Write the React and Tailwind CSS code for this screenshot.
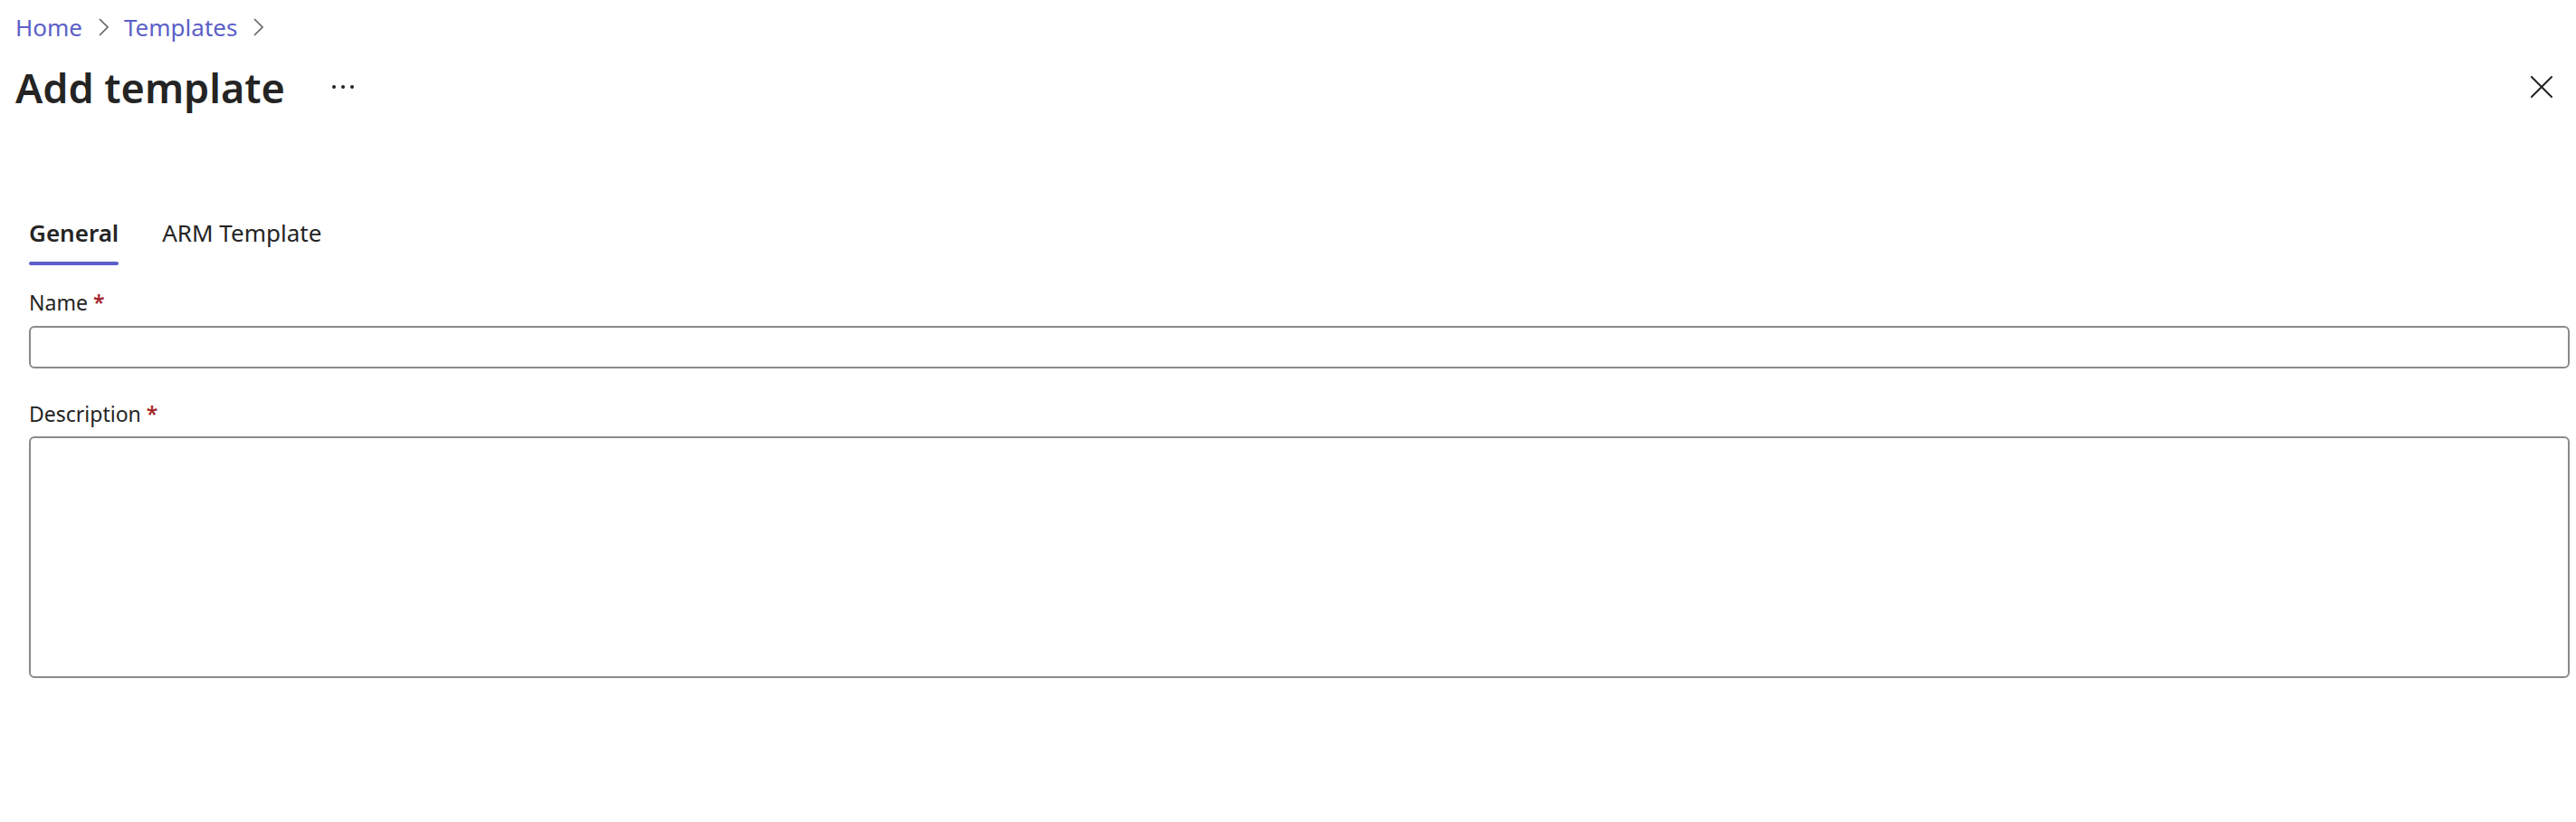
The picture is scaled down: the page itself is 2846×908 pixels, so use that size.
import React, { useState } from 'react';

const Chevron = () => (
  <svg width="14" height="22" viewBox="0 0 14 22" fill="none" stroke="#616161" strokeWidth="1.6" className="mx-[16px]">
    <path d="M3 2l9 9-9 9" />
  </svg>
);

const Required = () => <span className="text-[#a4262c] ml-[6px] font-semibold">*</span>;

export default function App() {
  const [tab, setTab] = useState('general');

  return (
    <div className="w-[2846px] h-[908px] bg-white text-[#242424] font-['Segoe_UI','Noto_Sans',sans-serif]">
      {/* Header */}
      <div className="pl-[17px] pr-[22px] pt-[10px]">
        <nav className="flex items-center h-[40px] text-[26px] text-[#5b5fc7]">
          <a href="#" className="hover:underline">Home</a>
          <Chevron />
          <a href="#" className="hover:underline">Templates</a>
          <Chevron />
        </nav>
        <div className="flex items-center justify-between mt-[18px] h-[56px]">
          <div className="flex items-center">
            <h1 className="text-[45px] font-semibold leading-none">Add template</h1>
            <button className="ml-[50px] flex items-center gap-[6px] px-[2px] h-[20px]">
              <span className="w-[4px] h-[4px] rounded-full bg-[#242424]" />
              <span className="w-[4px] h-[4px] rounded-full bg-[#242424]" />
              <span className="w-[4px] h-[4px] rounded-full bg-[#242424]" />
            </button>
          </div>
          <button className="w-[32px] h-[32px] flex items-center justify-center">
            <svg width="24" height="24" viewBox="0 0 24 24" fill="none" stroke="#242424" strokeWidth="2" strokeLinecap="square">
              <path d="M1 1l22 22M23 1L1 23" />
            </svg>
          </button>
        </div>
      </div>

      {/* Tabs */}
      <div className="px-[32px] mt-[114px]">
        <div className="flex items-start gap-[48px] text-[26px]">
          <button onClick={() => setTab('general')} className="flex flex-col items-stretch">
            <span className={tab === 'general' ? 'font-semibold' : ''}>General</span>
            <span className={`h-[4px] mt-[12px] rounded-full ${tab === 'general' ? 'bg-[#5b5fc7]' : 'bg-transparent'}`} />
          </button>
          <button onClick={() => setTab('arm')} className="flex flex-col items-stretch">
            <span className={tab === 'arm' ? 'font-semibold' : ''}>ARM Template</span>
            <span className={`h-[4px] mt-[12px] rounded-full ${tab === 'arm' ? 'bg-[#5b5fc7]' : 'bg-transparent'}`} />
          </button>
        </div>

        {/* Form */}
        <div className="mt-[25px] text-[23px]">
          <label className="block leading-[32px]">Name<Required /></label>
          <input className="mt-[10px] block w-[2807px] h-[47px] border-2 border-[#8a8a8a] rounded-[6px] px-[14px] outline-none" />

          <label className="block leading-[32px] mt-[34px]">Description<Required /></label>
          <textarea className="mt-[9px] block w-[2807px] h-[267px] border-2 border-[#8a8a8a] rounded-[6px] px-[14px] py-[10px] outline-none resize-none" />
        </div>
      </div>
    </div>
  );
}
